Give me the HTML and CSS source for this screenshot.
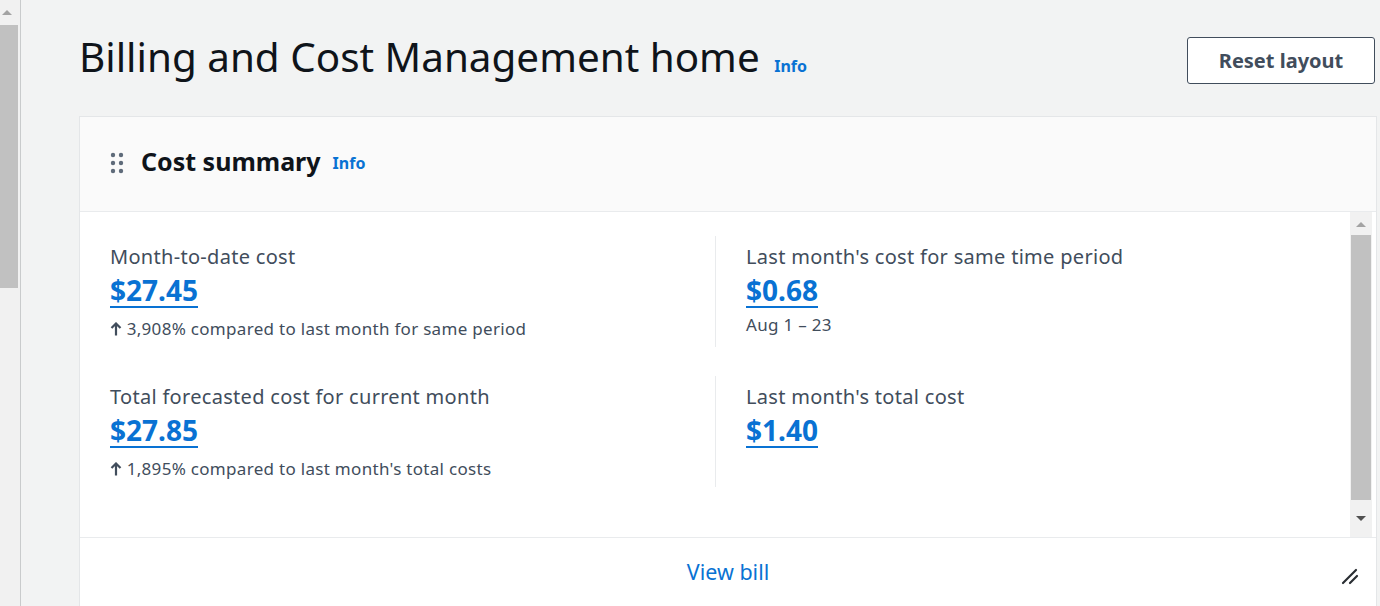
FILE: index.html
```html
<!DOCTYPE html>
<html>
<head>
<meta charset="utf-8">
<link rel="stylesheet" href="styles.css">
</head>
<body>
<div class="frame">
  <div class="outer-scroll">
    <div class="arrow-up gray"></div>
    <div class="outer-thumb"></div>
  </div>
  <main class="main">
    <header class="page-head">
      <h1 class="page-title">Billing and Cost Management home <a class="info info-lg" href="#">Info</a></h1>
      <button class="btn">Reset layout</button>
    </header>
    <section class="card">
      <div class="card-head">
        <svg class="drag" width="14" height="22" viewBox="0 0 14 22">
          <circle cx="3" cy="3" r="2.2"/><circle cx="11" cy="3" r="2.2"/>
          <circle cx="3" cy="11" r="2.2"/><circle cx="11" cy="11" r="2.2"/>
          <circle cx="3" cy="19" r="2.2"/><circle cx="11" cy="19" r="2.2"/>
        </svg>
        <h2 class="card-title">Cost summary</h2>
        <a class="info info-md" href="#">Info</a>
      </div>
      <div class="card-body">
        <div class="metrics">
          <div class="metric">
            <div class="label">Month-to-date cost</div>
            <a class="value" href="#">$27.45</a>
            <div class="sub"><svg class="up" width="12" height="14" viewBox="0 0 12 14"><path d="M6 1.5V13.5M1.5 6L6 1.5L10.5 6" fill="none" stroke="#414d5c" stroke-width="2.2" stroke-linejoin="miter"/></svg> 3,908% compared to last month for same period</div>
          </div>
          <div class="metric right">
            <div class="label">Last month's cost for same time period</div>
            <a class="value" href="#">$0.68</a>
            <div class="sub date">Aug 1 – 23</div>
          </div>
          <div class="metric">
            <div class="label">Total forecasted cost for current month</div>
            <a class="value" href="#">$27.85</a>
            <div class="sub"><svg class="up" width="12" height="14" viewBox="0 0 12 14"><path d="M6 1.5V13.5M1.5 6L6 1.5L10.5 6" fill="none" stroke="#414d5c" stroke-width="2.2" stroke-linejoin="miter"/></svg> 1,895% compared to last month's total costs</div>
          </div>
          <div class="metric right">
            <div class="label">Last month's total cost</div>
            <a class="value" href="#">$1.40</a>
          </div>
        </div>
        <div class="inner-scroll">
          <div class="arrow-up gray"></div>
          <div class="inner-thumb"></div>
          <div class="arrow-down"></div>
        </div>
      </div>
      <div class="card-foot">
        <a class="view-bill" href="#">View bill</a>
        <svg class="resize" width="18" height="18" viewBox="0 0 18 18"><path d="M2 16L15 3M9 16L16 9" stroke="#2a2e33" stroke-width="2.2" stroke-linecap="round" fill="none"/></svg>
      </div>
    </section>
  </main>
</div>
</body>
</html>
```
FILE: styles.css
```css
* { box-sizing: border-box; }
html, body { margin: 0; padding: 0; }
body {
  width: 1380px;
  height: 606px;
  overflow: hidden;
  background: #f2f3f3;
  font-family: "Noto Sans", "Open Sans", sans-serif;
  color: #16191f;
}
.frame {
  display: flex;
  height: 606px;
}
.outer-scroll {
  width: 21px;
  flex: none;
  background: #f1f1f1;
  border-right: 1px solid #c9cbcc;
  display: flex;
  flex-direction: column;
  align-items: flex-start;
}
.arrow-up {
  width: 0; height: 0;
  border-left: 5px solid transparent;
  border-right: 5px solid transparent;
  border-bottom: 5px solid #a3a3a3;
}
.arrow-down {
  width: 0; height: 0;
  border-left: 5px solid transparent;
  border-right: 5px solid transparent;
  border-top: 5px solid #505050;
}
.outer-scroll .arrow-up { margin: 10px 0 0 2px; }
.outer-thumb {
  margin-top: 10px;
  width: 18px;
  height: 263px;
  background: #c1c1c1;
}
.main {
  flex: 1;
  padding: 0 3px 0 58px;
  background: #f2f3f3;
}
.page-head {
  display: flex;
  justify-content: space-between;
  align-items: flex-start;
  height: 116px;
  padding-top: 34px;
}
.page-title {
  margin: 0;
  font-size: 40.4px;
  font-weight: 400;
  line-height: 46px;
  color: #0f141a;
}
.info {
  color: #0972d3;
  text-decoration: none;
  font-weight: 700;
  letter-spacing: 0;
}
.info-lg { font-size: 16px; margin-left: 4px; }
.info-md { font-size: 16px; margin-left: 12px; margin-top: 3px; }
.btn {
  margin-top: 3px;
  margin-right: 2px;
  width: 188px;
  height: 47px;
  background: #fff;
  border: 1px solid #414d5c;
  border-radius: 3px;
  font-family: inherit;
  font-size: 20px;
  font-weight: 700;
  color: #414d5c;
  padding: 0;
}
.card {
  background: #fff;
  border: 1px solid #e4e6e8;
  border-bottom: none;
  height: 490px;
  display: flex;
  flex-direction: column;
}
.card-head {
  height: 95px;
  background: #fafafa;
  border-bottom: 1px solid #e9ebed;
  display: flex;
  align-items: center;
  padding-left: 30px;
  padding-bottom: 6px;
}
.drag { fill: #5f6b7a; margin-top: 3px; }
.card-title {
  margin: 0 0 0 17px;
  font-size: 25px;
  font-weight: 700;
  color: #0f141a;
}
.card-body {
  height: 326px;
  flex: none;
  display: flex;
  border-bottom: 1px solid #e9ebed;
}
.metrics {
  flex: 1;
  display: grid;
  grid-template-columns: 605px 1fr;
  grid-auto-rows: 111px;
  row-gap: 29px;
  padding: 24px 0 0 30px;
}
.metric {
  padding-top: 8px;
}
.metric.right {
  border-left: 1px solid #e9ebed;
  padding-left: 30px;
}
.label {
  font-size: 20px;
  letter-spacing: 0.3px;
  line-height: 26px;
  color: #414d5c;
}
.value {
  display: inline-block;
  font-size: 28px;
  font-weight: 700;
  line-height: 32px;
  color: #0972d3;
  text-decoration: none;
  border-bottom: 2px solid #0972d3;
  margin-top: 4px;
}
.sub {
  font-size: 17px;
  letter-spacing: 0.3px;
  line-height: 22px;
  color: #414d5c;
  margin-top: 10px;
}
.sub.date { margin-top: 6px; }
.up { vertical-align: -1px; }
.inner-scroll {
  width: 22px;
  flex: none;
  background: #f1f1f1;
  display: flex;
  flex-direction: column;
  align-items: center;
  margin-right: 4px;
}
.inner-scroll .arrow-up { margin-top: 10px; }
.inner-thumb {
  margin-top: 8px;
  width: 20px;
  height: 265px;
  background: #c1c1c1;
}
.inner-scroll .arrow-down { margin-top: 16px; }
.card-foot {
  flex: 1;
  display: flex;
  justify-content: center;
  align-items: flex-start;
  padding-top: 19px;
  position: relative;
}
.view-bill {
  font-size: 21.5px;
  color: #0972d3;
  text-decoration: none;
}
.resize {
  position: absolute;
  right: 17px;
  top: 29px;
}
```
